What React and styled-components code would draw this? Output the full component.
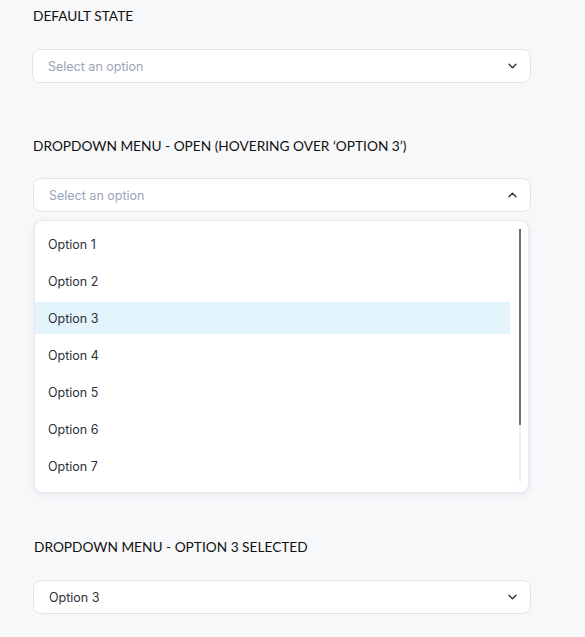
import React from "react";
import styled, { createGlobalStyle } from "styled-components";

const Global = createGlobalStyle`
  html, body { margin: 0; padding: 0; background: #f7f8fa; }
  body { font-family: "Lato", "Liberation Sans", sans-serif; }
`;

const Page = styled.div`
  display: flex;
  flex-direction: column;
  padding: 6px 0 0 32px;
  width: 499px;
`;

const Section = styled.section`
  display: flex;
  flex-direction: column;
  margin-bottom: ${(p) => p.$mb || 0}px;
`;

const Heading = styled.h2`
  margin: 0 0 0 ${(p) => p.$indent || 1}px;
  font-family: "Lato", "Liberation Sans", sans-serif;
  font-weight: 400;
  font-size: 13.7px;
  line-height: 20px;
  color: #111;
`;

const Select = styled.div`
  box-sizing: border-box;
  margin-top: ${(p) => p.$mt || 23}px;
  margin-left: ${(p) => p.$shift || 0}px;
  height: 34px;
  background: #fff;
  border: 1px solid #e3e5ec;
  border-radius: 8px;
  display: flex;
  align-items: center;
  justify-content: space-between;
  padding: 0 13px 0 15px;
`;

const Value = styled.span`
  font-family: "Inter", "Lato", sans-serif;
  font-size: 12.5px;
  color: ${(p) => (p.$placeholder ? "#9ba4b8" : "#2c2f3a")};
`;

const Menu = styled.div`
  box-sizing: border-box;
  margin: 8px 2px 0 2px;
  height: 273px;
  background: #fff;
  border: 1px solid #e6e8ee;
  border-radius: 8px;
  box-shadow: 0 2px 6px rgba(20, 30, 60, 0.08);
  display: flex;
  overflow: hidden;
`;

const List = styled.ul`
  list-style: none;
  margin: 0;
  padding: 7px 0 0;
  flex: 0 0 475px;
  display: flex;
  flex-direction: column;
  gap: 5px;
`;

const Item = styled.li`
  flex: 0 0 32px;
  display: flex;
  align-items: center;
  padding-left: 13px;
  background: ${(p) => (p.$hover ? "#e4f4fc" : "transparent")};
  font-family: "Inter", "Lato", sans-serif;
  font-size: 12.5px;
  color: #2c2f3a;
`;

const ScrollTrack = styled.div`
  margin: 8px 0 10px 9px;
  width: 2px;
  display: flex;
  flex-direction: column;
  background: #f1f1f3;
`;

const ScrollThumb = styled.div`
  height: 196px;
  background: #6b6e76;
`;

const Chevron = ({ up }) => (
  <svg width="9" height="6" viewBox="0 0 9 6" fill="none">
    <path
      d={up ? "M1 4.8 L4.5 1.3 L8 4.8" : "M1 1.2 L4.5 4.7 L8 1.2"}
      stroke="#2a2d36"
      strokeWidth="1.3"
      strokeLinecap="round"
      strokeLinejoin="round"
    />
  </svg>
);

const options = ["Option 1", "Option 2", "Option 3", "Option 4", "Option 5", "Option 6", "Option 7"];

export default function App() {
  return (
    <>
      <Global />
      <Page>
        <Section $mb={53}>
          <Heading>DEFAULT STATE</Heading>
          <Select>
            <Value $placeholder>Select an option</Value>
            <Chevron />
          </Select>
        </Section>
        <Section $mb={44}>
          <Heading>DROPDOWN MENU - OPEN (HOVERING OVER ‘OPTION 3’)</Heading>
          <Select $shift={1} $mt={22}>
            <Value $placeholder>Select an option</Value>
            <Chevron up />
          </Select>
          <Menu>
            <List>
              {options.map((o) => (
                <Item key={o} $hover={o === "Option 3"}>
                  {o}
                </Item>
              ))}
            </List>
            <ScrollTrack>
              <ScrollThumb />
            </ScrollTrack>
          </Menu>
        </Section>
        <Section>
          <Heading $indent={2}>DROPDOWN MENU - OPTION 3 SELECTED</Heading>
          <Select $shift={1}>
            <Value>Option 3</Value>
            <Chevron />
          </Select>
        </Section>
      </Page>
    </>
  );
}
